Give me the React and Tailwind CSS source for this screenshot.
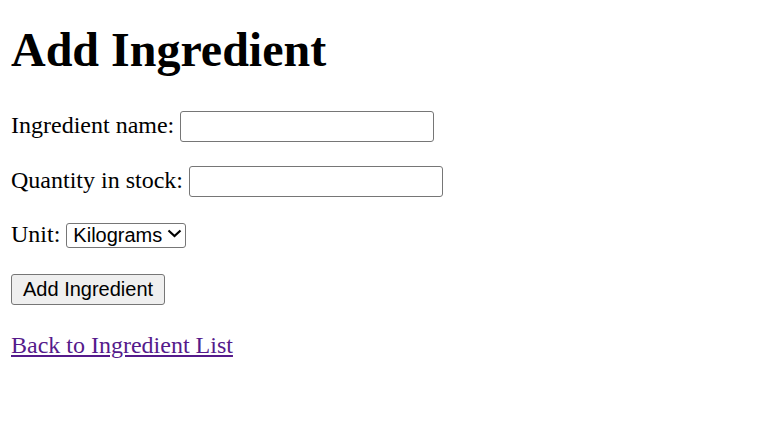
import { useState } from 'react'

export default function App() {
  const [name, setName] = useState('')
  const [qty, setQty] = useState('')
  const [unit, setUnit] = useState('kg')

  return (
    <div className="min-h-screen bg-white px-[11px] font-['Liberation_Serif',serif] text-[24px] text-black">
      <h1 className="pt-[22px] text-[48px] font-bold leading-[55px]">Add Ingredient</h1>

      <form onSubmit={(e) => e.preventDefault()}>
        <div className="mt-[34px] flex items-baseline gap-[6px] leading-[28px]">
          <label htmlFor="name">Ingredient name:</label>
          <input
            id="name"
            className="h-[31px] w-[254px] rounded-[3px] border border-[#767676] bg-white px-[4px] font-['Liberation_Sans',sans-serif] text-[20px] leading-[23px]"
            value={name}
            onChange={(e) => setName(e.target.value)}
          />
        </div>

        <div className="mt-[24px] flex items-baseline gap-[6px] leading-[28px]">
          <label htmlFor="qty">Quantity in stock:</label>
          <input
            id="qty"
            className="h-[31px] w-[254px] rounded-[3px] border border-[#767676] bg-white px-[4px] font-['Liberation_Sans',sans-serif] text-[20px] leading-[23px]"
            value={qty}
            onChange={(e) => setQty(e.target.value)}
          />
        </div>

        <div className="mt-[23px] flex items-baseline gap-[6px] leading-[28px]">
          <label htmlFor="unit">Unit:</label>
          <span className="relative inline-block">
            <select
              id="unit"
              className="h-[25px] w-[120px] appearance-none rounded-[3px] border border-[#767676] bg-white pl-[6px] font-['Liberation_Sans',sans-serif] text-[20px] leading-[23px]"
              value={unit}
              onChange={(e) => setUnit(e.target.value)}
            >
              <option value="kg">Kilograms</option>
              <option value="g">Grams</option>
              <option value="l">Liters</option>
              <option value="pcs">Pieces</option>
            </select>
            <svg
              className="pointer-events-none absolute right-[4px] top-[9px]"
              width="15"
              height="9"
              viewBox="0 0 15 9"
              fill="none"
            >
              <path d="M1.5 1.5 L7.5 7 L13.5 1.5" stroke="black" strokeWidth="2.2" />
            </svg>
          </span>
        </div>

        <button
          type="submit"
          className="mt-[26px] block h-[31px] rounded-[3px] border border-[#767676] bg-[#efefef] px-[11px] font-['Liberation_Sans',sans-serif] text-[20px] leading-[23px]"
        >
          Add Ingredient
        </button>
      </form>

      <p className="mt-[26px] leading-[28px]">
        <a href="#" className="text-[#551a8b] underline">Back to Ingredient List</a>
      </p>
    </div>
  )
}
